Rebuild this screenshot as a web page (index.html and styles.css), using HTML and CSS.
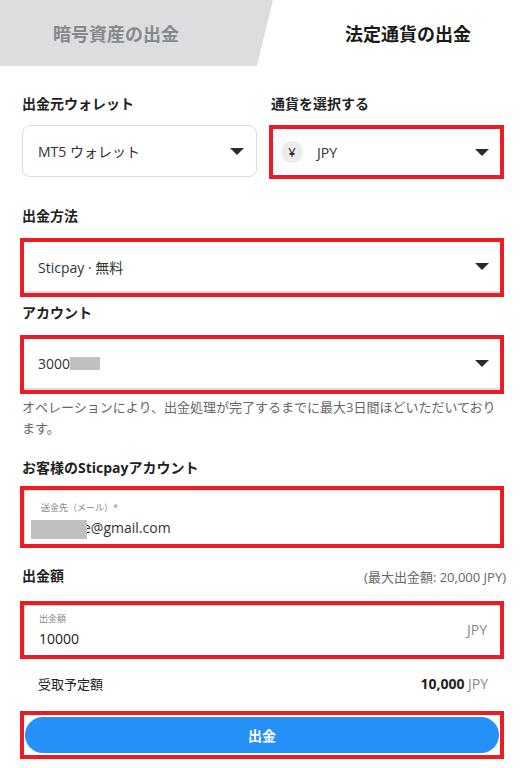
FILE: index.html
```html
<html>
    <head>
        <title>出金</title>
        <link rel="stylesheet" href="styles.css">
    </head>
    <body>
        <div class="tabs">
            <div class="tab tab-off">暗号資産の出金</div>
            <div class="tab tab-on">法定通貨の出金</div>
        </div>
        <div class="form">
            <div class="row-2">
                <div class="col">
                    <div class="label">出金元ウォレット</div>
                    <div class="select wallet">
                        <span>MT5 ウォレット</span>
                        <i class="caret"></i>
                    </div>
                </div>
                <div class="col">
                    <div class="label">通貨を選択する</div>
                    <div class="mark currency">
                        <span class="coin">¥</span>
                        <span class="code">JPY</span>
                        <i class="caret"></i>
                    </div>
                </div>
            </div>

            <div class="label gap-method">出金方法</div>
            <div class="mark">
                <div class="line-field">
                    <span>Sticpay · 無料</span>
                    <i class="caret"></i>
                </div>
            </div>

            <div class="label gap-account">アカウント</div>
            <div class="mark">
                <div class="line-field">
                    <span>3000<span class="redact redact-num"></span></span>
                    <i class="caret"></i>
                </div>
            </div>
            <p class="hint">オペレーションにより、出金処理が完了するまでに最大3日間ほどいただいております。</p>

            <div class="label gap-email">お客様のSticpayアカウント</div>
            <div class="mark">
                <div class="text-field email">
                    <div class="mini">送金先（メール）*</div>
                    <div class="value"><span class="redact redact-mail"></span>e@gmail.com</div>
                </div>
            </div>

            <div class="amount-head">
                <div class="label">出金額</div>
                <div class="max">(最大出金額: 20,000 JPY)</div>
            </div>
            <div class="mark">
                <div class="text-field amount">
                    <div>
                        <div class="mini">出金額</div>
                        <div class="value">10000</div>
                    </div>
                    <span class="unit">JPY</span>
                </div>
            </div>

            <div class="receive">
                <span>受取予定額</span>
                <span><b>10,000</b> <span class="unit">JPY</span></span>
            </div>

            <div class="mark btn-mark">
                <button class="submit">出金</button>
            </div>
        </div>
    </body>
</html>
```

FILE: styles.css
```css
body{
    margin: 0;
    background: #fff;
    color: #222;
    font-family: "Open Sans", "Noto Sans CJK JP", sans-serif;
}
.tabs{
    display: flex;
    height: 66px;
}
.tab{
    display: flex;
    align-items: center;
    justify-content: center;
    font-size: 18px;
    font-weight: 700;
}
.tab-off{
    width: 232px;
    padding-right: 41px;
    background: #dcdddf;
    color: #86888c;
    clip-path: polygon(0 0, 273px 0, 257px 100%, 0 100%);
    border-bottom-right-radius: 6px;
}
.tab-on{
    flex: 1;
    padding-left: 16px;
    color: #1a1a1a;
}
.form{
    padding: 28px 23px 0 22px;
}
.label{
    font-size: 14px;
    font-weight: 700;
    line-height: 20px;
    color: #1f1f1f;
}
.row-2{
    display: grid;
    grid-template-columns: 235px 1fr;
    column-gap: 14px;
}
.row-2 .label{
    margin-bottom: 11px;
}
.mark{
    border: 4px solid #ec1c24;
    margin-left: -2px;
    background: #fff;
}
.caret{
    width: 0;
    height: 0;
    border-left: 7px solid transparent;
    border-right: 7px solid transparent;
    border-top: 7px solid #2b2b2b;
}
.select{
    display: flex;
    align-items: center;
    justify-content: space-between;
    font-size: 14px;
    color: #333;
}
.wallet{
    margin-top: 2px;
    height: 50px;
    border: 1px solid #dcdcdc;
    border-radius: 8px;
    padding: 0 12px 0 15px;
}
.currency{
    height: 46px;
    display: flex;
    align-items: center;
    padding: 0 11px 0 8px;
    font-size: 14px;
    color: #333;
}
.coin{
    width: 22px;
    height: 22px;
    border-radius: 50%;
    background: #ececec;
    display: flex;
    align-items: center;
    justify-content: center;
    font-size: 13px;
    color: #222;
}
.currency .code{
    margin-left: 14px;
    flex: 1;
}
.gap-method{
    margin-top: 27px;
    margin-bottom: 12px;
}
.gap-account{
    margin-top: 6px;
    margin-bottom: 12px;
}
.line-field{
    height: 49px;
    border-bottom: 2px solid #dcdcdc;
    display: flex;
    align-items: center;
    justify-content: space-between;
    padding: 0 11px 0 14px;
    font-size: 14px;
    color: #333;
}
.redact{
    display: inline-block;
    background: #c0c0c0;
    vertical-align: middle;
}
.redact-num{
    width: 30px;
    height: 13px;
    margin-top: -3px;
}
.redact-mail{
    width: 56px;
    height: 19px;
    margin-right: -4px;
    position: relative;
}
.hint{
    margin: 3px 0 0;
    font-size: 13px;
    line-height: 21px;
    color: #666;
}
.gap-email{
    margin-top: 19px;
    margin-bottom: 8px;
}
.text-field{
    border-top: 1px solid #dcdcdc;
    border-left: 1px solid #e4e4e4;
}
.email{
    height: 53px;
    padding: 0 0 0 6px;
}
.mini{
    font-size: 9px;
    color: #888;
    line-height: 12px;
}
.email .mini{
    margin: 11px 0 0 10px;
}
.email .value{
    font-size: 14px;
    color: #333;
    margin-top: 4px;
    line-height: 20px;
}
.amount-head{
    margin-top: 18px;
    margin-bottom: 15px;
    display: flex;
    justify-content: space-between;
    align-items: center;
}
.max{
    font-size: 13px;
    color: #666;
    margin-right: -2px;
}
.amount{
    height: 49px;
    display: flex;
    justify-content: space-between;
    align-items: flex-start;
    padding: 0 13px 0 14px;
}
.amount .mini{
    margin-top: 7px;
}
.amount .value{
    font-size: 14px;
    color: #222;
    margin-top: 4px;
    line-height: 20px;
}
.unit{
    color: #888;
    font-size: 14px;
}
.amount .unit{
    margin-top: 14px;
}
.receive{
    margin-top: 15px;
    padding: 0 16px;
    display: flex;
    justify-content: space-between;
    font-size: 13px;
    line-height: 20px;
    color: #222;
}
.receive b{
    font-size: 14px;
    color: #1f1f1f;
}
.btn-mark{
    margin-top: 17px;
    padding: 2px 1px;
}
.submit{
    display: block;
    width: 100%;
    height: 36px;
    border: none;
    border-radius: 18px;
    background: #2490f8;
    color: #fff;
    font-family: "Open Sans", "Noto Sans CJK JP", sans-serif;
    font-size: 14px;
    font-weight: 700;
}
```
